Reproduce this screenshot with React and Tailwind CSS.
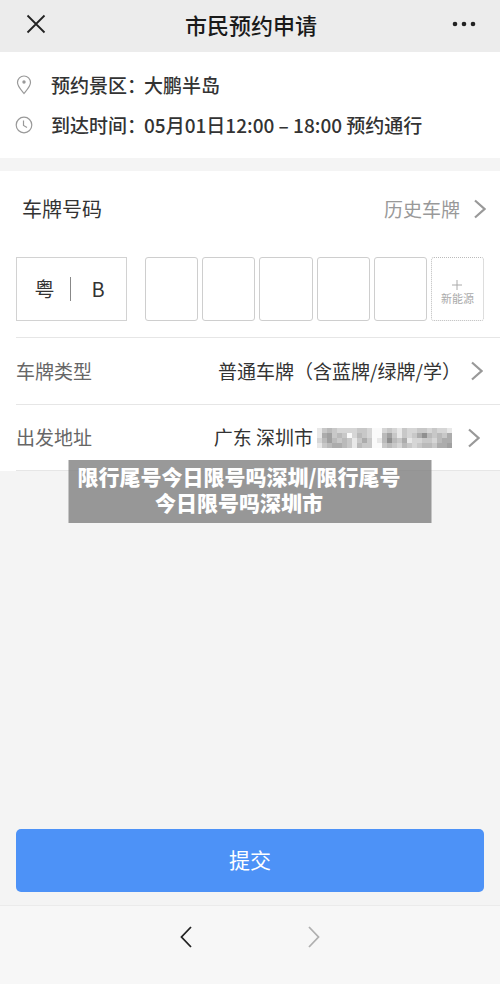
import React, { useState } from 'react';

const mosaicRows = [
  'ecbcddddccdffdcdecddccdcdde',
  'ea9cbcfdbcdffb9cecdca8bcbca',
  'db9bcbcecacfeb8bcaeddccdbaa',
  'ecbaabcebccffcbcdbcdcbbcaa9',
];

const greys = {
  8: '#8f8f8f',
  9: '#a0a0a0',
  a: '#acacac',
  b: '#bababa',
  c: '#c8c8c8',
  d: '#d6d6d6',
  e: '#e8e8e8',
  f: '#fafafa',
};

const Mosaic = () => (
  <svg viewBox="0 0 135 20" className="h-5 w-[135px]" aria-hidden="true">
    {mosaicRows.map((row, y) =>
      row.split('').map((tone, x) => (
        <rect key={`${x}-${y}`} x={x * 5} y={y * 5} width="5" height="5" fill={greys[tone]} />
      ))
    )}
  </svg>
);

const Arrow = () => (
  <svg viewBox="0 0 12 20" className="h-5 w-3 shrink-0" fill="none" stroke="#999999" strokeWidth="2.2" aria-hidden="true">
    <path d="M1 1.5 10.5 10 1 18.5" />
  </svg>
);

const PinIcon = () => (
  <svg viewBox="0 0 18 20" className="h-5 w-[18px] shrink-0" fill="none" stroke="#999999" strokeWidth="1.2" aria-hidden="true">
    <path d="M9 18.5C6.2 15 2.5 11.2 2.5 7.5a6.5 6.5 0 0 1 13 0C15.5 11.2 11.8 15 9 18.5Z" />
    <circle cx="9" cy="7" r="1.7" fill="#999999" stroke="none" />
  </svg>
);

const ClockIcon = () => (
  <svg viewBox="0 0 18 18" className="h-[18px] w-[18px] shrink-0" fill="none" stroke="#999999" strokeWidth="1.2" aria-hidden="true">
    <circle cx="9" cy="9" r="7.8" />
    <path d="M8.5 4.5V9.5L12 11.5" />
  </svg>
);

const App = () => {
  const [plate, setPlate] = useState(['', '', '', '', '']);

  const handleChange = (index, value) => {
    setPlate(plate.map((char, i) => (i === index ? value.toUpperCase() : char)));
  };

  const handleSubmit = (e) => {
    e.preventDefault();
    console.log('Plate:', plate.join(''));
  };

  return (
    <div className="flex min-h-screen flex-col bg-[#f4f4f4] font-['Noto_Sans_CJK_SC',sans-serif] text-[#333333]">
      <header className="grid h-[52px] grid-cols-[1fr_auto_1fr] items-center bg-[#ececec] pr-6 pl-[26px] pb-1">
        <button type="button" aria-label="关闭" className="w-5">
          <svg viewBox="0 0 20 20" className="h-5 w-5" fill="none" stroke="#222222" strokeWidth="1.8">
            <path d="M1.5 1.5 18.5 18.5M18.5 1.5 1.5 18.5" />
          </svg>
        </button>
        <h1 className="text-[22px] leading-[30px] font-medium text-[#1a1a1a]">市民预约申请</h1>
        <button type="button" aria-label="更多" className="w-6 justify-self-end">
          <svg viewBox="0 0 24 6" className="h-1.5 w-6" fill="#222222">
            <circle cx="3" cy="3" r="2.3" />
            <circle cx="12" cy="3" r="2.3" />
            <circle cx="21" cy="3" r="2.3" />
          </svg>
        </button>
      </header>

      <dl className="flex flex-col gap-3 bg-white px-[15px] py-[19px] text-[19px] leading-7 font-medium">
        <div className="flex items-center">
          <PinIcon />
          <dt className="ml-[18px] w-[93px] whitespace-nowrap">预约景区：</dt>
          <dd>大鹏半岛</dd>
        </div>
        <div className="flex items-center">
          <ClockIcon />
          <dt className="ml-[18px] w-[93px] whitespace-nowrap">到达时间：</dt>
          <dd className="whitespace-nowrap">05月01日12:00 – 18:00 预约通行</dd>
        </div>
      </dl>

      <form onSubmit={handleSubmit} className="mt-[13px] flex grow flex-col">
        <div className="relative bg-white">
          <div className="flex items-center justify-between pt-6 pr-[14px] pl-[22px]">
            <h2 className="text-xl leading-7">车牌号码</h2>
            <button type="button" className="flex items-center gap-[14px] text-[19px] leading-7 text-[#999999]">
              历史车牌
              <Arrow />
            </button>
          </div>

          <div className="mt-[34px] flex h-16 gap-[18px] px-4">
            <button type="button" className="flex w-[111px] shrink-0 items-center justify-center gap-4 border border-[#d2d2d2] pr-1 text-xl">
              粤
              <span className="h-6 w-px bg-[#888888]"></span>
              <span className="ml-1">B</span>
            </button>
            <div className="grid grow grid-cols-6 gap-1">
              {plate.map((char, index) => (
                <input
                  key={index}
                  type="text"
                  aria-label={`车牌第${index + 2}位`}
                  maxLength={1}
                  value={char}
                  onChange={(e) => handleChange(index, e.target.value)}
                  className="w-full min-w-0 rounded-[3px] border border-[#cecece] text-center text-xl"
                />
              ))}
              <button
                type="button"
                className="flex flex-col items-center justify-center rounded-[3px] border border-dotted border-[#bbbbbb] pt-2 text-[11px] leading-4 whitespace-nowrap text-[#aaaaaa]"
              >
                <svg viewBox="0 0 10 10" className="h-2.5 w-2.5" stroke="#aaaaaa" aria-hidden="true">
                  <path d="M5 0V10M0 5H10" />
                </svg>
                新能源
              </button>
            </div>
          </div>

          <div className="mt-4 ml-4 text-[19px]">
            <div className="flex h-[67px] items-center justify-between border-t border-[#e6e6e6] pr-[17px]">
              <span className="text-[#666666]">车牌类型</span>
              <button type="button" className="flex items-center gap-[10px] whitespace-nowrap">
                普通车牌（含蓝牌/绿牌/学）
                <Arrow />
              </button>
            </div>
            <div className="flex h-[67px] items-center justify-between border-y border-[#e6e6e6] pr-5">
              <span className="text-[#666666]">出发地址</span>
              <button type="button" className="flex items-center gap-4 whitespace-nowrap">
                <span className="flex items-center gap-1">
                  广东 深圳市
                  <Mosaic />
                </span>
                <Arrow />
              </button>
            </div>
          </div>

          <p className="absolute top-[289px] left-1/2 w-[363px] -translate-x-1/2 bg-[#808080]/80 pt-[3px] pr-6 pb-2 pl-[2px] text-center text-[21px] leading-[26px] font-black text-white">
            限行尾号今日限号吗深圳/限行尾号今日限号吗深圳市
          </p>
        </div>

        <button
          type="submit"
          className="mx-4 mt-auto mb-[13px] h-[63px] rounded-[5px] bg-[#4d92f7] pb-0.5 text-[21px] text-white"
        >
          提交
        </button>
      </form>

      <nav className="flex h-[79px] justify-center gap-[116px] border-t border-[#ebebeb] bg-[#f7f7f7] pb-4">
        <button type="button" aria-label="后退">
          <svg viewBox="0 0 12 22" className="h-[22px] w-3" fill="none" stroke="#222222" strokeWidth="1.8">
            <path d="M11 1 1.5 11 11 21" />
          </svg>
        </button>
        <button type="button" aria-label="前进">
          <svg viewBox="0 0 12 22" className="h-[22px] w-3" fill="none" stroke="#b0b0b0" strokeWidth="1.8">
            <path d="M1 1 10.5 11 1 21" />
          </svg>
        </button>
      </nav>
    </div>
  );
};

export default App;
